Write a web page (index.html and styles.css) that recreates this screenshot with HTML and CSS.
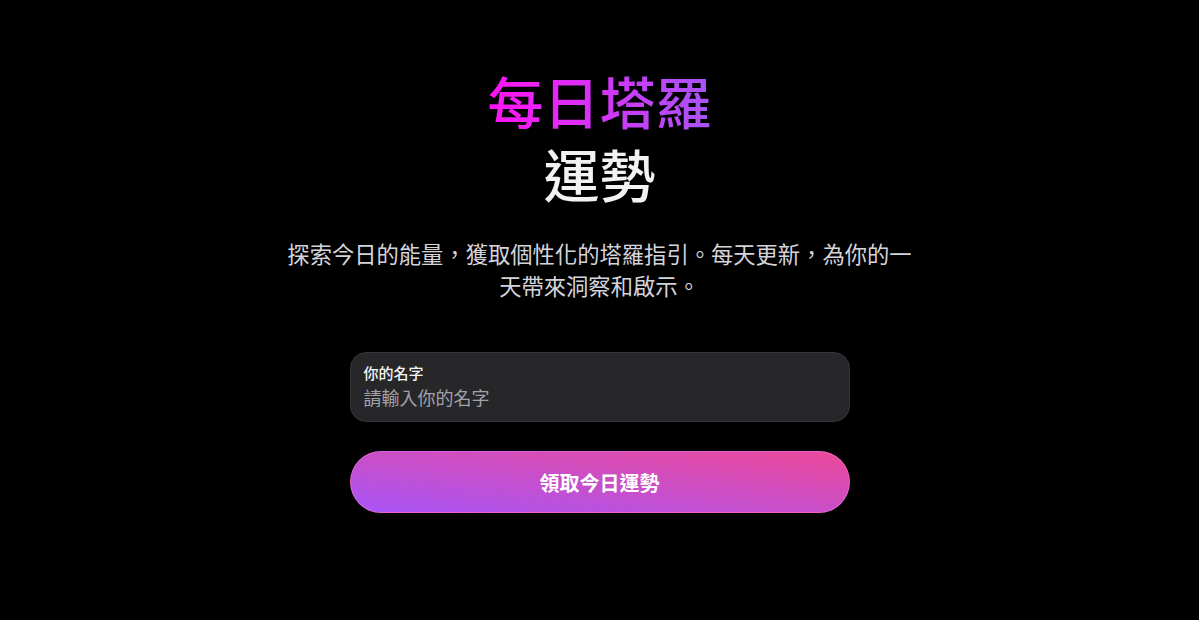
FILE: index.html
```html
<!DOCTYPE html>
<html lang="zh-Hant">
<head>
<meta charset="utf-8">
<title>每日塔羅運勢</title>
<link rel="stylesheet" href="styles.css">
</head>
<body>
<main class="page">
  <h1 class="title">
    <span class="title-accent">每日塔羅</span>
    <span class="title-main">運勢</span>
  </h1>
  <p class="subtitle">探索今日的能量，獲取個性化的塔羅指引。每天更新，為你的一天帶來洞察和啟示。</p>
  <form class="form">
    <label class="field">
      <span class="field-label">你的名字</span>
      <input class="field-input" type="text" placeholder="請輸入你的名字">
    </label>
    <button class="cta" type="button">領取今日運勢</button>
  </form>
</main>
</body>
</html>
```

FILE: styles.css
```css
* { box-sizing: border-box; }
html, body { margin: 0; padding: 0; background: #000; }
body {
  font-family: "Noto Sans CJK TC", "Noto Sans", sans-serif;
  color: #f4f4f5;
  min-height: 620px;
}
.page {
  display: flex;
  flex-direction: column;
  align-items: center;
  padding-top: 63px;
}
.title {
  margin: 0;
  font-size: 56px;
  line-height: 73px;
  font-weight: 500;
  text-align: center;
  display: flex;
  flex-direction: column;
  align-items: center;
}
.title-accent {
  display: inline-block;
  background: linear-gradient(to right, #ff14f5, #a855f7);
  -webkit-background-clip: text;
  background-clip: text;
  color: transparent;
}
.title-main { color: #f2f2f2; }
.subtitle {
  margin: 28px 0 0;
  width: 640px;
  font-size: 22.3px;
  line-height: 32px;
  color: #d4d4dc;
  text-align: center;
}
.form {
  margin-top: 51px;
  width: 500px;
  display: flex;
  flex-direction: column;
  gap: 29px;
}
.field {
  display: flex;
  flex-direction: column;
  height: 70px;
  padding: 9px 13px;
  background: #27272a;
  border: 1px solid #34343a;
  border-radius: 16px;
}
.field-label {
  font-size: 15px;
  line-height: 22px;
  font-weight: 500;
  color: #f4f4f5;
}
.field-input {
  margin: 0;
  padding: 0;
  border: 0;
  outline: none;
  background: transparent;
  font-family: inherit;
  font-size: 18px;
  line-height: 26px;
  height: 26px;
  color: #f4f4f5;
}
.field-input::placeholder { color: #a1a1aa; }
.cta {
  height: 62px;
  border: 1px solid rgba(255, 120, 220, 0.5);
  border-radius: 31px;
  background: linear-gradient(to top right, #a855f7, #ec4899);
  color: #fff;
  font-family: inherit;
  font-size: 20px;
  font-weight: 700;
  cursor: pointer;
}
```
